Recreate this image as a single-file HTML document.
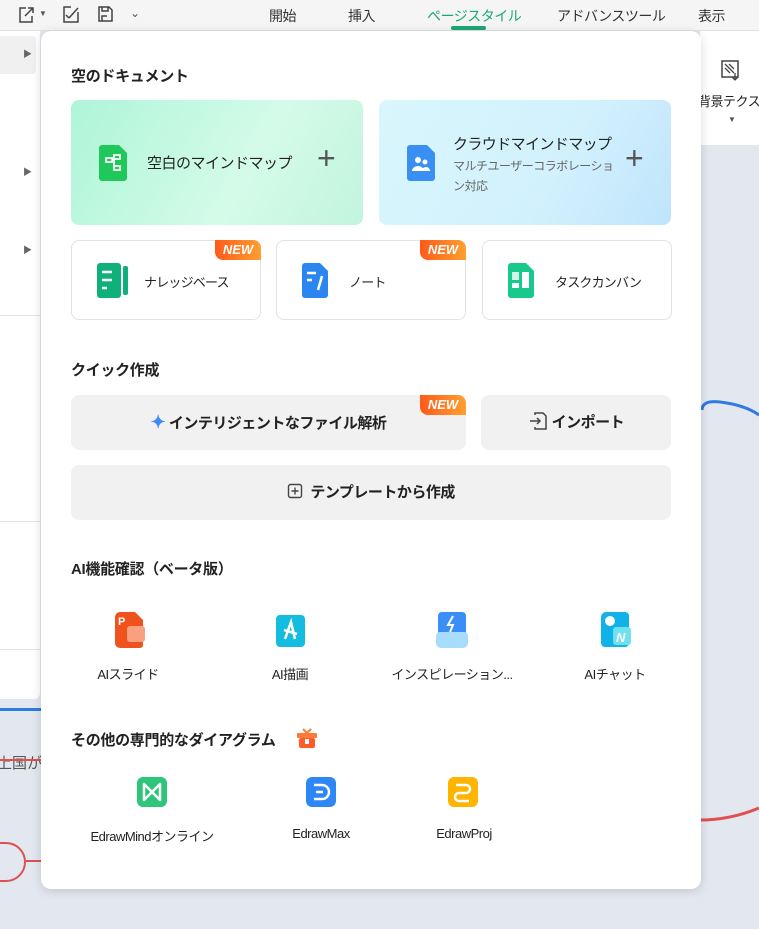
<!DOCTYPE html>
<html><head><meta charset="utf-8">
<style>
*{box-sizing:border-box;margin:0;padding:0}
body{width:759px;height:929px;overflow:hidden;position:relative;background:#e3e7ef;font-family:"Liberation Sans","Noto Sans CJK JP",sans-serif;color:#222}
.top{position:absolute;left:0;top:0;width:759px;height:31px;background:#f5f5f5;border-bottom:1px solid #e2e2e2}
.tab{position:absolute;top:6px;font-size:14px;color:#333;letter-spacing:-0.5px}
.left{position:absolute;left:0;top:31px;width:40px;height:668px;background:#fff;border-radius:0 0 6px 0}
.rtool{position:absolute;left:700px;top:31px;width:59px;height:114px;background:#fff}
.panel{position:absolute;left:41px;top:31px;width:660px;height:858px;background:#fff;border-radius:10px;box-shadow:0 2px 10px rgba(0,0,0,.15)}
.h{position:absolute;font-size:15px;font-weight:bold;color:#222;letter-spacing:-0.3px}
.big{position:absolute;top:69px;width:292px;height:125px;border-radius:8px}
.card{position:absolute;top:209px;width:190px;height:80px;border:1px solid #e2e2e2;border-radius:8px;background:#fff}
.card span{letter-spacing:-0.8px}
.new{position:absolute;right:-1px;top:-1px;width:46px;height:20px;border-radius:0 8px 0 8px;background:linear-gradient(90deg,#ff5a1a,#ffa030);color:#fff;font-size:13px;font-weight:bold;font-style:italic;text-align:center;line-height:20px;letter-spacing:0}
.btn{position:absolute;background:#f1f1f1;border-radius:8px;font-size:15px;font-weight:bold;text-align:center;letter-spacing:-0.5px}
.ic{position:absolute;border-radius:5px}
.lbl{position:absolute;font-size:13px;color:#222;text-align:center;width:150px;letter-spacing:-0.5px}
</style></head><body>
<div class="top">
 <svg style="position:absolute;left:16px;top:5px" width="20" height="20"><path d="M10 3H4v14h12v-6M9 11l8-8M12 3h5v5" fill="none" stroke="#444" stroke-width="1.5"/></svg>
 <span style="position:absolute;left:39px;top:9px;font-size:8px;color:#555">▼</span>
 <svg style="position:absolute;left:61px;top:4px" width="20" height="20"><path d="M10 3H3v15h14V8M8 14l-3-3M8 14l9-10" fill="none" stroke="#444" stroke-width="1.5"/></svg>
 <svg style="position:absolute;left:96px;top:4px" width="20" height="20"><path d="M3 3h10l3 3v11H3zM6 3v4h6V3M6 17v-5h5" fill="none" stroke="#444" stroke-width="1.5"/></svg>
 <span style="position:absolute;left:130px;top:6px;font-size:12px;color:#555">⌄</span>
 <span class="tab" style="left:269px">開始</span>
 <span class="tab" style="left:348px">挿入</span>
 <span class="tab" style="left:427px;color:#1aa874">ページスタイル</span>
 <div style="position:absolute;left:451px;top:26px;width:35px;height:4px;background:#1aa874;border-radius:2px"></div>
 <span class="tab" style="left:557px">アドバンスツール</span>
 <span class="tab" style="left:698px">表示</span>
</div>
<div class="left">
 <div style="position:absolute;left:0;top:5px;width:36px;height:38px;background:#f0f0f0;border-radius:0 4px 4px 0"></div>
 <span style="position:absolute;left:23px;top:16px;font-size:9px;color:#666">▶</span>
 <span style="position:absolute;left:23px;top:134px;font-size:9px;color:#666">▶</span>
 <span style="position:absolute;left:23px;top:212px;font-size:9px;color:#666">▶</span>
 <div style="position:absolute;left:0;top:284px;width:40px;border-top:1px solid #e5e5e5"></div>
 <div style="position:absolute;left:0;top:490px;width:40px;border-top:1px solid #e5e5e5"></div>
 <div style="position:absolute;left:0;top:618px;width:40px;border-top:1px solid #e5e5e5"></div>
</div>
<div style="position:absolute;left:0;top:708px;width:41px;height:3px;background:#2f7be0"></div>
<span style="position:absolute;left:-3px;top:752px;font-size:15px;color:#555">上国が</span>
<div style="position:absolute;left:0;top:759px;width:41px;border-top:2px solid #e05050"></div>
<div style="position:absolute;left:-22px;top:842px;width:48px;height:40px;border:2px solid #e05050;border-radius:20px"></div>
<div style="position:absolute;left:26px;top:860px;width:16px;border-top:2px solid #e05050"></div>
<svg style="position:absolute;left:700px;top:380px" width="59" height="60"><path d="M2 30 Q2 20 20 22 Q45 25 59 35" fill="none" stroke="#2f7be0" stroke-width="3"/></svg>
<svg style="position:absolute;left:700px;top:780px" width="59" height="60"><path d="M0 40 Q30 40 59 28" fill="none" stroke="#e05050" stroke-width="3"/></svg>
<div class="rtool">
 <svg style="position:absolute;left:20px;top:28px" width="22" height="22"><rect x="2" y="2" width="16" height="16" fill="none" stroke="#444" stroke-width="1.5"/><path d="M5 5l9 9M9 5l5 5M5 9l5 5M15 14v6M12 18l3 3 3-3" stroke="#444" stroke-width="1.3" fill="none"/></svg>
 <span style="position:absolute;left:-2px;top:60px;font-size:13px;white-space:nowrap;letter-spacing:-0.5px">背景テクスチ</span>
 <span style="position:absolute;left:28px;top:84px;font-size:8px;color:#555">▼</span>
</div>

<div class="panel">
 <div class="h" style="left:30px;top:34px">空のドキュメント</div>
 <div class="big" style="left:30px;background:linear-gradient(120deg,#aef5d8,#d4fbe9 60%,#c2f4dd)">
  <svg style="position:absolute;left:26px;top:45px" width="32" height="36"><path d="M2 3a3 3 0 0 1 3-3h17l8 8v25a3 3 0 0 1-3 3H5a3 3 0 0 1-3-3z" fill="#20c75a"/><path d="M9 13h6v4H9zM17 10h6v4h-6zM17 21h6v4h-6zM15 15h2M17 12v11" fill="none" stroke="#fff" stroke-width="1.8"/></svg>
  <span style="position:absolute;left:76px;top:52px;font-size:15px;letter-spacing:-0.5px">空白のマインドマップ</span>
  <span style="position:absolute;left:246px;top:40px;font-size:32px;color:#555;font-weight:300">+</span>
 </div>
 <div class="big" style="left:338px;background:linear-gradient(120deg,#d8f6fb,#d2f1fd 60%,#bfe4fc)">
  <svg style="position:absolute;left:26px;top:45px" width="32" height="36"><path d="M2 3a3 3 0 0 1 3-3h17l8 8v25a3 3 0 0 1-3 3H5a3 3 0 0 1-3-3z" fill="#3a8ff5"/><circle cx="13" cy="15" r="3" fill="#fff"/><circle cx="20" cy="17" r="2.5" fill="#fff"/><path d="M7 26a6 5 0 0 1 12 0zM17 26a4 4 0 0 1 8 0z" fill="#fff"/></svg>
  <span style="position:absolute;left:74px;top:33px;font-size:15px;letter-spacing:-0.6px">クラウドマインドマップ</span>
  <span style="position:absolute;left:74px;top:56px;font-size:12px;color:#666;width:170px;line-height:20px;letter-spacing:-0.5px">マルチユーザーコラボレーション対応</span>
  <span style="position:absolute;left:246px;top:40px;font-size:32px;color:#555;font-weight:300">+</span>
 </div>
 <div class="card" style="left:30px">
  <svg style="position:absolute;left:25px;top:22px" width="34" height="36"><rect x="0" y="0" width="24" height="35" rx="3" fill="#10b07a"/><rect x="26" y="3" width="5" height="29" rx="2" fill="#10b07a"/><path d="M5 9h10M5 17h10M5 25h5" stroke="#fff" stroke-width="2.5"/></svg>
  <span style="position:absolute;left:72px;top:31px;font-size:13px">ナレッジベース</span>
  <div class="new">NEW</div>
 </div>
 <div class="card" style="left:235px">
  <svg style="position:absolute;left:25px;top:22px" width="32" height="36"><path d="M0 3a3 3 0 0 1 3-3h15l8 8v24a3 3 0 0 1-3 3H3a3 3 0 0 1-3-3z" fill="#2c86f0"/><path d="M5 10h9M5 17h5M20 13l-4 14" stroke="#fff" stroke-width="2.5"/></svg>
  <span style="position:absolute;left:72px;top:31px;font-size:13px">ノート</span>
  <div class="new">NEW</div>
 </div>
 <div class="card" style="left:441px">
  <svg style="position:absolute;left:25px;top:22px" width="32" height="36"><path d="M0 3a3 3 0 0 1 3-3h15l8 8v24a3 3 0 0 1-3 3H3a3 3 0 0 1-3-3z" fill="#17c98a"/><rect x="4" y="9" width="7" height="8" fill="#fff" opacity=".8"/><rect x="14" y="9" width="7" height="16" fill="#fff"/><rect x="4" y="20" width="7" height="5" fill="#fff"/></svg>
  <span style="position:absolute;left:72px;top:31px;font-size:13px">タスクカンバン</span>
 </div>

 <div class="h" style="left:30px;top:328px">クイック作成</div>
 <div class="btn" style="left:30px;top:364px;width:395px;height:55px;line-height:55px"><span style="color:#3b8cf5;font-size:18px">✦</span> インテリジェントなファイル解析<div class="new" style="top:0;right:0">NEW</div></div>
 <div class="btn" style="left:440px;top:364px;width:190px;height:55px;line-height:55px"><svg style="vertical-align:-4px" width="20" height="20"><path d="M7 4V2h8l3 3v13H7v-2M2 10h10M9 7l3 3-3 3" fill="none" stroke="#444" stroke-width="1.5"/></svg> インポート</div>
 <div class="btn" style="left:30px;top:434px;width:600px;height:55px;line-height:55px"><svg style="vertical-align:-2px" width="16" height="16"><rect x="1.5" y="1.5" width="13" height="13" rx="2" fill="none" stroke="#444" stroke-width="1.4"/><path d="M8 4.5v7M4.5 8h7" stroke="#444" stroke-width="1.4"/></svg>&nbsp; テンプレートから作成</div>

 <div class="h" style="left:30px;top:527px">AI機能確認（ベータ版）</div>
 <svg class="ic" style="left:74px;top:581px" width="32" height="36"><path d="M0 3a3 3 0 0 1 3-3h17l8 8v25a3 3 0 0 1-3 3H3a3 3 0 0 1-3-3z" fill="#f0521e"/><text x="3" y="13" font-size="11" font-weight="bold" fill="#fff" font-family="Liberation Sans">P</text><rect x="12" y="14" width="18" height="16" rx="3" fill="#f8a080"/></svg>
 <svg class="ic" style="left:235px;top:581px" width="30" height="36"><rect x="0" y="3" width="29" height="32" rx="4" fill="#14bde0"/><path d="M9 27l6-17 4 17M8 18l13 4" stroke="#fff" stroke-width="2.5" fill="none"/></svg>
 <svg class="ic" style="left:395px;top:581px" width="32" height="36"><rect x="2" y="0" width="28" height="24" rx="4" fill="#3b8ef5"/><rect x="0" y="20" width="32" height="16" rx="4" fill="#a8dcfc"/><path d="M17 4l-5 9h5l-3 7" stroke="#fff" stroke-width="2" fill="none"/></svg>
 <svg class="ic" style="left:560px;top:581px" width="32" height="36"><rect x="0" y="0" width="28" height="35" rx="4" fill="#10b2e8"/><rect x="12" y="15" width="18" height="18" rx="3" fill="#6fe0ee"/><circle cx="9" cy="9" r="5" fill="#fff"/><text x="15" y="30" font-size="13" font-weight="bold" font-style="italic" fill="#fff" font-family="Liberation Sans">N</text></svg>
 <div class="lbl" style="left:12px;top:633px">AIスライド</div>
 <div class="lbl" style="left:174px;top:633px">AI描画</div>
 <div class="lbl" style="left:336px;top:633px">インスピレーション...</div>
 <div class="lbl" style="left:499px;top:633px">AIチャット</div>

 <div class="h" style="left:30px;top:698px">その他の専門的なダイアグラム</div>
 <svg style="position:absolute;left:255px;top:696px" width="22" height="22"><rect x="1" y="6" width="20" height="5" rx="1" fill="#ff7a3a"/><rect x="3" y="11" width="16" height="10" rx="2" fill="#ff5a2a"/><path d="M7 2l4 4 4-4" stroke="#ff7a3a" stroke-width="2" fill="none"/><rect x="9" y="12" width="4" height="5" fill="#fff"/></svg>
 <svg class="ic" style="left:96px;top:746px" width="30" height="30"><rect width="30" height="30" rx="6" fill="#2cc57a"/><path d="M7 7v16l16-16v16L15 15z" stroke="#fff" stroke-width="2.5" fill="none" stroke-linejoin="round"/></svg>
 <svg class="ic" style="left:265px;top:746px" width="30" height="30"><rect width="30" height="30" rx="6" fill="#2f86f5"/><path d="M8 8h8a7 7 0 0 1 0 14H8M10 15h7" stroke="#fff" stroke-width="2.5" fill="none"/></svg>
 <svg class="ic" style="left:407px;top:746px" width="30" height="30"><rect width="30" height="30" rx="6" fill="#ffb400"/><path d="M8 8h10a4 4 0 0 1 0 8H11a4 4 0 0 0 0 8h10" stroke="#fff" stroke-width="2.5" fill="none"/></svg>
 <div class="lbl" style="left:36px;top:795px">EdrawMindオンライン</div>
 <div class="lbl" style="left:205px;top:795px">EdrawMax</div>
 <div class="lbl" style="left:348px;top:795px">EdrawProj</div>
</div>
</body></html>
